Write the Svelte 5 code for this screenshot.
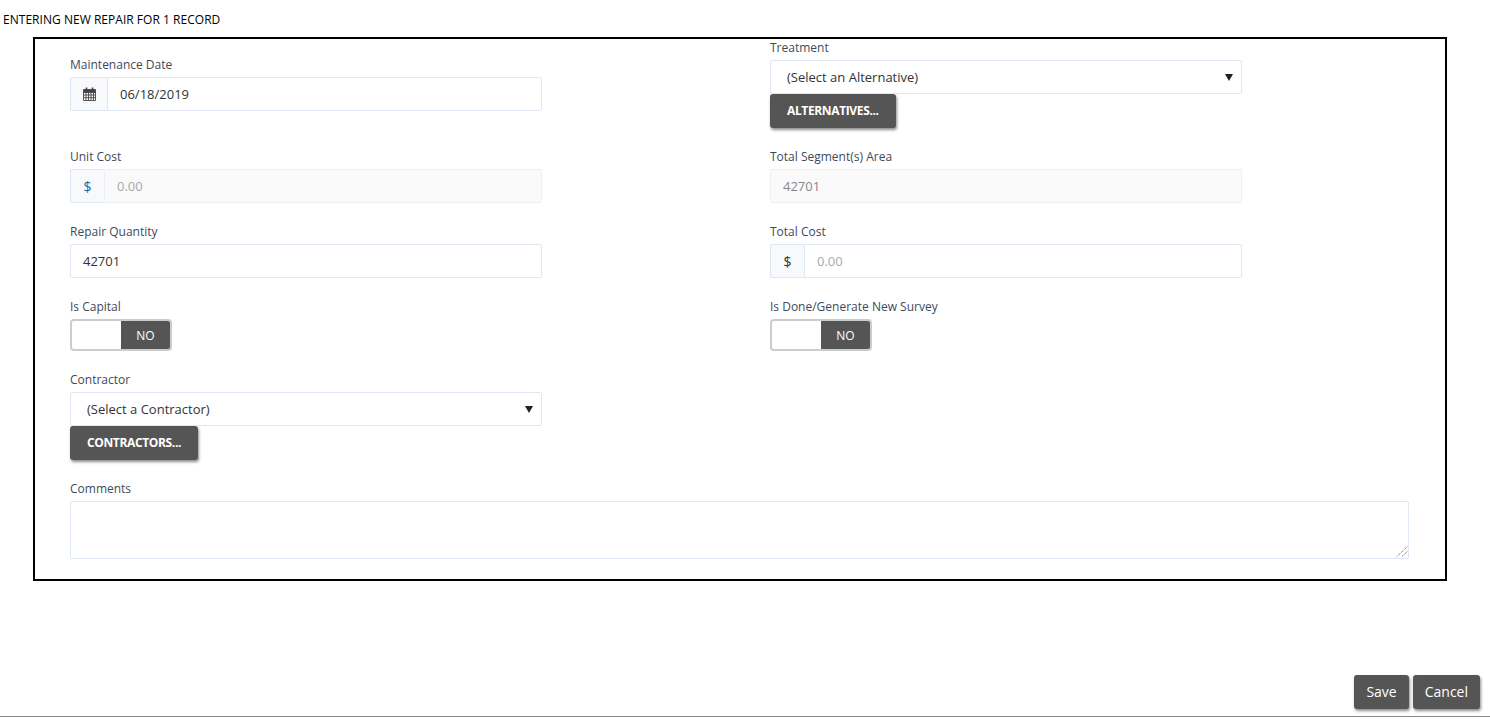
<script>
	let maintenanceDate = $state('06/18/2019');
	let repairQuantity = $state('42701');
	let totalCost = $state('');
	let comments = $state('');
	let treatment = $state('');
	let contractor = $state('');
	let isCapital = $state(false);
	let isDone = $state(false);
</script>

{#snippet arrow()}
	<svg class="arrow" width="8" height="8" viewBox="0 0 8 8" aria-hidden="true"><path d="M0 1h8L4 8z" fill="#222" /></svg>
{/snippet}

{#snippet toggle(on, flip)}
	<button type="button" class="switch" class:on onclick={flip}>
		<span class="knob"></span>
		<span class="state">{on ? 'YES' : 'NO'}</span>
	</button>
{/snippet}

<div class="page">
	<div class="title">ENTERING NEW REPAIR FOR 1 RECORD</div>

	<div class="frame">
		<div class="grid">
			<div class="field pushed">
				<label for="date">Maintenance Date</label>
				<div class="group">
					<span class="addon date-addon">
						<svg width="13" height="14" viewBox="0 0 13 14" aria-hidden="true">
							<path d="M.5 2.5h12v11H.5z M.5 5.5h12 M.5 8h12 M.5 10.7h12 M3 5.5v8 M5.5 5.5v8 M8 5.5v8 M10.5 5.5v8" fill="none" stroke="#444" stroke-width="0.9" />
							<path d="M.5 2.5h12v3H.5z" fill="#444" />
							<path d="M3.5 .5v3 M9.5 .5v3" stroke="#444" stroke-width="1.6" />
						</svg>
					</span>
					<input id="date" bind:value={maintenanceDate} />
				</div>
			</div>

			<div class="field">
				<label for="treatment">Treatment</label>
				<div class="select-wrap">
					<select id="treatment" bind:value={treatment}>
						<option value="">(Select an Alternative)</option>
					</select>
					{@render arrow()}
				</div>
				<button type="button" class="btn raised">ALTERNATIVES...</button>
			</div>

			<div class="field">
				<label for="unit">Unit Cost</label>
				<div class="group">
					<span class="addon money blue">$</span>
					<input id="unit" placeholder="0.00" disabled />
				</div>
			</div>

			<div class="field">
				<label for="area">Total Segment(s) Area</label>
				<input id="area" value="42701" disabled />
			</div>

			<div class="field">
				<label for="qty">Repair Quantity</label>
				<input id="qty" bind:value={repairQuantity} />
			</div>

			<div class="field">
				<label for="total">Total Cost</label>
				<div class="group">
					<span class="addon money">$</span>
					<input id="total" placeholder="0.00" bind:value={totalCost} />
				</div>
			</div>

			<div class="field">
				<span class="label">Is Capital</span>
				{@render toggle(isCapital, () => (isCapital = !isCapital))}
			</div>

			<div class="field">
				<span class="label">Is Done/Generate New Survey</span>
				{@render toggle(isDone, () => (isDone = !isDone))}
			</div>

			<div class="field">
				<label for="contractor">Contractor</label>
				<div class="select-wrap">
					<select id="contractor" bind:value={contractor}>
						<option value="">(Select a Contractor)</option>
					</select>
					{@render arrow()}
				</div>
				<button type="button" class="btn raised">CONTRACTORS...</button>
			</div>

			<div class="field"></div>

			<div class="field wide">
				<label for="comments">Comments</label>
				<div class="area-wrap">
					<textarea id="comments" bind:value={comments}></textarea>
					<svg class="grip" width="12" height="12" viewBox="0 0 12 12" aria-hidden="true">
						<rect width="12" height="12" fill="#fff" />
						<path d="M11.3 .7 .7 10.7 M11.3 5.7 5.7 10.7" stroke="#555" stroke-width="1" stroke-dasharray="1 1" fill="none" />
					</svg>
				</div>
			</div>
		</div>
	</div>

	<div class="footer">
		<button type="button" class="btn action">Save</button>
		<button type="button" class="btn action">Cancel</button>
	</div>
</div>

<style>
	:global(body) {
		background: #fff;
		overflow: hidden;
	}

	.page {
		height: 719px;
		box-sizing: border-box;
		display: flex;
		flex-direction: column;
		font-family: 'Open Sans', sans-serif;
		font-size: 12px;
		color: #333;
		border-bottom: 1px solid transparent;
	}

	.title {
		height: 37px;
		padding: 11px 0 0 3px;
		box-sizing: border-box;
		line-height: 17px;
		color: #000;
		font-weight: 500;
		letter-spacing: 0.03px;
	}

	.frame {
		margin-left: 33px;
		width: 1414px;
		height: 544px;
		box-sizing: border-box;
		border: 2px solid #000;
		padding: 0 35px;
	}

	.grid {
		display: grid;
		grid-template-columns: 472px 472px;
		column-gap: 228px;
		row-gap: 20px;
	}

	.field {
		display: flex;
		flex-direction: column;
		align-items: flex-start;
	}

	.pushed {
		padding-top: 17px;
	}

	.wide {
		grid-column: 1 / -1;
		width: 1339px;
	}

	label,
	.label {
		display: block;
		height: 17px;
		line-height: 17px;
		margin-bottom: 4px;
		color: #3f4a5a;
		font-weight: 500;
	}

	input,
	select,
	textarea {
		width: 100%;
		height: 34px;
		box-sizing: border-box;
		margin: 0;
		border: 1px solid #dfe7f3;
		border-radius: 2px;
		background: #fff;
		font: inherit;
		font-size: 13px;
		color: #333;
		outline: none;
		padding: 0 12px;
	}

	input::placeholder {
		color: #a9a9a9;
		opacity: 1;
	}

	input:disabled {
		background: #fafafa;
		color: #888;
		border-color: #ecf0f6;
	}

	.group {
		display: flex;
		width: 100%;
	}

	.group input {
		flex: 1;
		min-width: 0;
		border-radius: 0 2px 2px 0;
	}

	.addon {
		flex: none;
		height: 34px;
		box-sizing: border-box;
		display: flex;
		align-items: center;
		justify-content: center;
		border: 1px solid #dfe7f3;
		border-right: none;
		border-radius: 2px 0 0 2px;
		background: #f7f9fc;
		font-size: 14px;
	}

	.date-addon {
		width: 37px;
	}

	.money {
		width: 34px;
	}

	.blue {
		color: #1b6ca8;
	}

	.select-wrap,
	.area-wrap {
		position: relative;
		width: 100%;
	}

	select {
		appearance: none;
		display: block;
		padding-left: 16px;
	}

	.arrow {
		position: absolute;
		right: 9px;
		top: 13px;
		pointer-events: none;
	}

	.btn {
		border: none;
		border-radius: 3px;
		background: #555;
		color: #fff;
		font-family: inherit;
		cursor: pointer;
		box-shadow: 1px 2px 3px rgba(0, 0, 0, 0.45);
	}

	.raised {
		height: 34px;
		padding: 0 17px 2px;
		font-size: 12px;
		font-weight: 700;
		letter-spacing: -0.36px;
	}

	.switch {
		display: flex;
		width: 102px;
		height: 32px;
		box-sizing: border-box;
		padding: 0;
		border: 2px solid #ccc;
		border-radius: 4px;
		background: #fff;
		cursor: pointer;
		font-family: inherit;
	}

	.knob {
		width: 49px;
		height: 100%;
	}

	.state {
		flex: 1;
		height: 100%;
		display: flex;
		align-items: center;
		justify-content: center;
		background: #555;
		color: #fff;
		font-size: 12px;
		font-weight: 500;
		border-radius: 0 2px 2px 0;
	}

	.switch.on {
		flex-direction: row-reverse;
	}

	textarea {
		display: block;
		height: 58px;
		padding: 6px 12px;
		resize: both;
	}

	.grip {
		position: absolute;
		right: 1px;
		bottom: 1px;
		pointer-events: none;
	}

	.footer {
		display: flex;
		justify-content: flex-end;
		gap: 4px;
		margin-top: 94px;
		padding-right: 10px;
		height: 41px;
		box-sizing: border-box;
	}

	.action {
		height: 34px;
		padding: 0 12px 2px;
		font-size: 14px;
	}

	.page::after {
		content: '';
		display: block;
		height: 1px;
		background: #888;
	}
</style>
